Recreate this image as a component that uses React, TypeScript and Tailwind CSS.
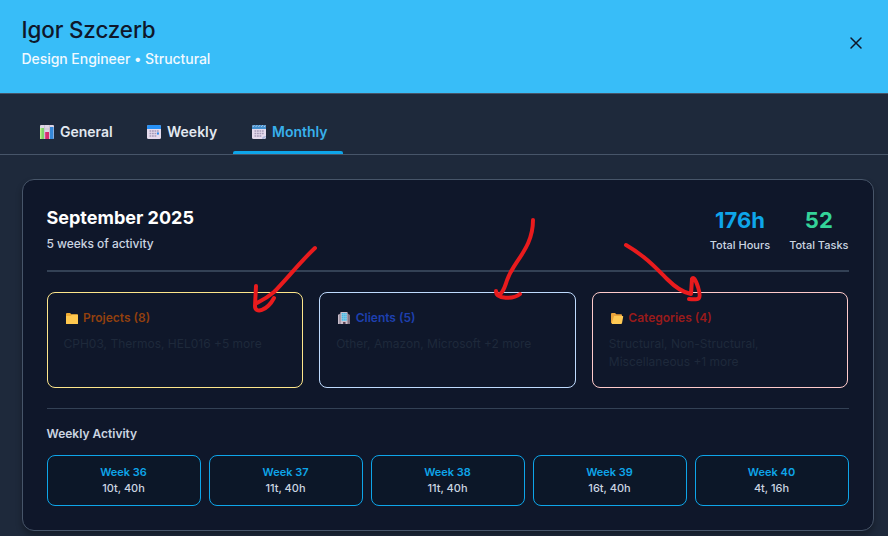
import React from "react";

const svgProps = { viewBox: "0 0 16 16", "aria-hidden": true } as const;

function ChartIcon() {
  return (
    <svg {...svgProps} className="block size-4 shrink-0">
      <rect x="1" y="1" width="14" height="14" rx="1" fill="#ded5e5" />
      <path d="M5.5 1v14M10.5 1v14M1 5h14M1 10h14" stroke="#b8aec2" strokeWidth=".5" />
      <rect x="2" y="4" width="3" height="11" fill="#7fd468" />
      <rect x="1" y="4" width="1.4" height="11" fill="#bdf28f" />
      <rect x="6.2" y="8" width="3.8" height="7" fill="#d92c72" />
      <rect x="11" y="3" width="3.5" height="12" fill="#3588d8" />
    </svg>
  );
}

function CalendarIcon({ spiral = false }: { spiral?: boolean }) {
  return (
    <svg {...svgProps} className="block size-4 shrink-0">
      <rect x="1" y="1" width="14" height="14" rx="1.5" fill="#e5dbed" />
      <path d="M1 5V2.5Q1 1 2.5 1h11Q15 1 15 2.5V5Z" fill={spiral ? "#438fce" : "#2790f5"} />
      {spiral && <path d="M2 2.8l1.3-1.5M4.8 2.8l1.3-1.5M7.6 2.8l1.3-1.5M10.4 2.8l1.3-1.5M13.2 2.8l1-1.2" stroke="#d6e2ef" strokeWidth=".9" />}
      <path d="M3.5 7h9.2M3.5 9.5h9.2M3.5 12h7" stroke="#a69bb8" strokeWidth="1.6" strokeDasharray="1.8 .7" />
      {spiral ? <path d="M11 15c0-2 1-3 4-3v1l-2 2Z" fill="#aeb9dc" /> : <path d="M11 8.6h1.9v1.8H11Z" fill="#278df3" />}
    </svg>
  );
}

function FolderIcon({ open = false }: { open?: boolean }) {
  return (
    <svg viewBox="0 0 14 14" aria-hidden className="block size-3.5 shrink-0">
      {open ? (
        <>
          <path d="M1 3Q1 2 2 2h3l1.4 1.3H11Q12 3.3 12 4.3V12H1.5Q1 12 1 11.5Z" fill="#eba43b" />
          <path d="M4 5h8.6Q13.4 5 13.2 5.8L12 12.2Q11.8 13 11 13H1.6Z" fill="#ffca55" />
        </>
      ) : (
        <>
          <path d="M1 3Q1 2 2 2h3l1.4 1.3H12Q13 3.3 13 4.3V13H1Z" fill="#f0ac34" />
          <path d="M1 5h4.5L7 3.8h6V12.2Q13 13 12.2 13H1.8Q1 13 1 12.2Z" fill="#ffc84f" />
        </>
      )}
    </svg>
  );
}

function BuildingIcon() {
  return (
    <svg viewBox="0 0 14 14" aria-hidden className="block size-3.5 shrink-0">
      <path d="M1 4l3-2v11H1ZM10 2l3 2v9h-3Z" fill="#857785" />
      <path d="M1 4l1.5-1v10H1Z" fill="#c8becb" />
      <path d="M3.5 1h7v12h-7Z" fill="#cbbfcb" />
      <rect x="4.7" y="2" width="5" height="8" fill="#83cfeb" />
      <path d="M5.3 2v8M7.2 2v8M9.1 2v8" stroke="#35a9dc" strokeWidth=".9" strokeDasharray="1.2 .7" />
      <path d="M6.1 11h2.4v2H6.1Z" fill="#584253" />
    </svg>
  );
}

const weeks = [
  ["Week 36", "10t, 40h"],
  ["Week 37", "11t, 40h"],
  ["Week 38", "11t, 40h"],
  ["Week 39", "16t, 40h"],
  ["Week 40", "4t, 16h"],
];

const groups = [
  { title: "Projects (8)", text: "CPH03, Thermos, HEL016 +5 more", border: "border-[#fde68a]", color: "text-[#92400e]", icon: <FolderIcon /> },
  { title: "Clients (5)", text: "Other, Amazon, Microsoft +2 more", border: "border-[#bfdbfe]", color: "text-[#1e40af]", icon: <BuildingIcon /> },
  { title: "Categories (4)", text: "Structural, Non-Structural, Miscellaneous +1 more", border: "border-[#fecaca]", color: "text-[#991b1b]", icon: <FolderIcon open /> },
];

export default function App() {
  return (
    <div className="relative h-[536px] w-[888px] overflow-hidden bg-[#1e293b] font-['Inter',sans-serif]">
      <header className="flex h-[94px] justify-between border-b border-[#475569] bg-[#38bdf8] pr-[25px] pl-[21.5px]">
        <div className="pt-4">
          <h1 className="text-[22.4px] leading-7 font-[550] tracking-[-0.12px] text-[#0f172a]">Igor Szczerb</h1>
          <p className="mt-[5px] text-sm font-medium tracking-[-0.05px] text-[#f0f9ff]">Design Engineer • Structural</p>
        </div>
        <svg viewBox="0 0 14 14" aria-label="Close" className="mt-9 size-3.5">
          <path d="M2 2l10 10M12 2L2 12" fill="none" stroke="#0f172a" strokeWidth="1.5" strokeLinecap="round" />
        </svg>
      </header>

      <nav className="flex h-[61px] items-end border-b border-[#475569] pl-[22px] text-sm font-semibold text-[#e2e8f0]">
        <div className="flex h-[44px] w-[107px] items-center gap-[5px] pl-[17px]"><ChartIcon />General</div>
        <div className="flex h-[44px] w-[104px] items-center gap-[5px] pl-[17px]"><CalendarIcon />Weekly</div>
        <div className="flex h-[44px] w-[110px] flex-col text-[#38b0ec]">
          <div className="flex h-[41px] items-center gap-[5px] pt-[3px] pl-[18px]"><CalendarIcon spiral />Monthly</div>
          <div className="h-[3px] rounded-t-[2px] bg-[#0ea5e9]" />
        </div>
      </nav>

      <main className="mt-6 ml-[21.5px] h-[352px] w-[852px] rounded-xl border border-[#475569] bg-[#0f172a] px-6 shadow-[0_4px_6px_rgba(0,0,0,0.3)]">
        <section className="flex h-[92px] justify-between border-b-2 border-[#334155]">
          <div className="pt-6">
            <h2 className="text-lg leading-7 font-bold text-white">September 2025</h2>
            <p className="mt-0.5 text-xs leading-5 font-medium tracking-[-0.04px] text-[#cbd5e1]">5 weeks of activity</p>
          </div>
          <div className="flex gap-5 pt-6 text-center">
            <div className="-mr-px"><div className="text-[22px] leading-8 font-bold text-[#0ea5e9]">176h</div><div className="text-[11px] leading-[18px] font-medium text-[#cbd5e1]">Total Hours</div></div>
            <div><div className="text-[22px] leading-8 font-bold text-[#34d399]">52</div><div className="text-[11px] leading-[18px] font-medium text-[#cbd5e1]">Total Tasks</div></div>
          </div>
        </section>
        <section className="mt-5 grid grid-cols-3 gap-4">
          {groups.map((g) => (
            <article key={g.title} className={`h-24 rounded-lg border px-4 pt-4 ${g.border}`}>
              <h3 className={`flex h-[18px] items-center gap-[4.5px] pl-px text-xs font-semibold ${g.color}`}>{g.icon}{g.title}</h3>
              <p className="mt-2 text-xs leading-[18px] text-[#1e293b]">{g.text}</p>
            </article>
          ))}
        </section>
        <section className="mt-5 border-t border-[#334155] pt-4">
          <h3 className="text-xs leading-[18px] font-semibold text-[#cbd5e1]">Weekly Activity</h3>
          <div className="mt-3 grid grid-cols-5 gap-2">
            {weeks.map(([name, total]) => (
              <div key={name} className="h-[51px] rounded-lg border border-[#0ea5e9] bg-[#0c1728] pt-2 text-center text-[11px] leading-4 text-[#cbd5e1]">
                <div className="font-semibold text-[#0ea5e9]">{name}</div><div className="font-medium">{total}</div>
              </div>
            ))}
          </div>
        </section>
      </main>

      <svg viewBox="0 0 888 536" aria-hidden className="pointer-events-none absolute inset-0 size-full" fill="none" stroke="#e91b1d" strokeWidth="4" strokeLinecap="round" strokeLinejoin="round">
        <path d="M315 248C301 261 285 281 274 292Q267 298 257 303M256 286L255 306C255 314 267 311 274 298" />
        <path d="M533 220C533 244 519 257 512 270C505 280 506 291 499 295Q496 294 496 291C496 300 514 299 520 294" />
        <path d="M626 245C645 256 656 268 667 279Q680 292 691 294L692 279Q694 275 698 287C702 300 699 300 689 299" />
      </svg>
    </div>
  );
}
